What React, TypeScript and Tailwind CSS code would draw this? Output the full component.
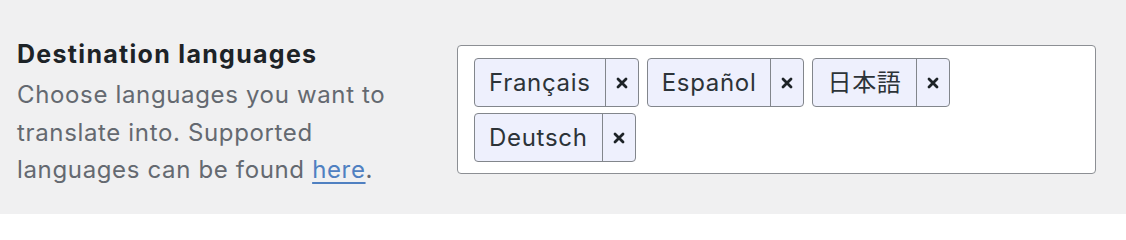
import React from 'react';

const languages = ['Français', 'Español', '日本語', 'Deutsch'];

const RemoveIcon = () => (
    <svg width="12" height="12" viewBox="0 0 12 12" aria-hidden="true">
        <path d="M2 2 L10 10 M10 2 L2 10" stroke="#1d2327" strokeWidth="2.8" strokeLinecap="round" />
    </svg>
);

const LanguageChip: React.FC<{ label: string }> = ({ label }) => (
    <div className="flex items-stretch rounded-[4px] border border-[#82868c] bg-[#eef0fd] text-[#2c3338]">
        <span className="px-[14px] py-[6px] text-[24px] leading-[35px] tracking-[0.7px]">{label}</span>
        <button className="flex w-[33px] items-center justify-center border-l border-[#82868c]">
            <RemoveIcon />
        </button>
    </div>
);

export default function App() {
    return (
        <div
            className="flex h-[214px] w-full bg-[#f0f0f1] pl-[17px] pt-[39px]"
            style={{ fontFamily: 'Inter, "Noto Sans CJK JP", sans-serif' }}
        >
            {/* Label column */}
            <div className="w-[440px] shrink-0">
                <h2 className="mb-[7px] text-[25px] font-bold leading-[30px] tracking-[1.3px] text-[#1d2327]">
                    Destination languages
                </h2>
                <p className="max-w-[390px] text-[24px] leading-[37.5px] tracking-[0.65px] text-[#646970]">
                    Choose languages you want to translate into. Supported languages can be found{' '}
                    <a href="#" className="text-[#4f80c1] underline underline-offset-[4px]">
                        here
                    </a>
                    .
                </p>
            </div>

            {/* Selected languages */}
            <div className="mt-[6px] h-[129px] w-[639px]">
                <div className="flex h-full flex-wrap content-start gap-x-[8px] gap-y-[6px] rounded-[4px] border border-[#8c8f94] bg-white px-[16px] pt-[12px]">
                    {languages.map((lang) => (
                        <LanguageChip key={lang} label={lang} />
                    ))}
                </div>
            </div>
        </div>
    );
}
